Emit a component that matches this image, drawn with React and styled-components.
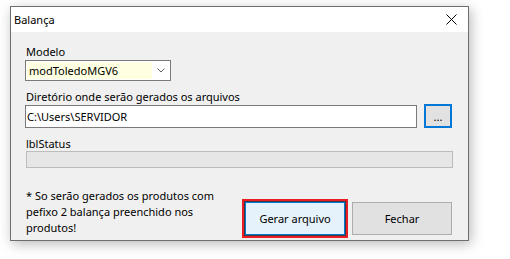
import React from "react";
import styled, { createGlobalStyle } from "styled-components";

const GlobalStyle = createGlobalStyle`
	html, body {
		margin: 0;
		padding: 0;
		background: #ffffff;
	}
	body {
		font-family: "Segoe UI", "Noto Sans", "Open Sans", sans-serif;
		font-size: 11px;
		color: #000;
	}
`;

const Desktop = styled.div`
	width: 510px;
	height: 259px;
	padding: 6px 0 0 10px;
	box-sizing: border-box;
	overflow: hidden;
`;

const Window = styled.div`
	width: 459px;
	height: 235px;
	box-sizing: border-box;
	border: 1px solid #6e6e6e;
	background: #f0f0f0;
	box-shadow: 2px 3px 12px rgba(0, 0, 0, 0.28);
	display: flex;
	flex-direction: column;
`;

const TitleBar = styled.div`
	height: 25px;
	background: #ffffff;
	display: flex;
	align-items: center;
	justify-content: space-between;
	padding-left: 3px;
	flex-shrink: 0;
`;

const Title = styled.span`
	line-height: 15px;
`;

const CloseButton = styled.div`
	width: 30px;
	height: 25px;
	display: flex;
	align-items: center;
	justify-content: center;
	margin-right: 2px;
`;

const Body = styled.div`
	flex: 1;
	padding: 12px 15px 0 14px;
	display: flex;
	flex-direction: column;
`;

const Label = styled.div`
	line-height: 15px;
	padding-left: 1px;
	margin-top: ${(p) => p.$top || 0}px;
	margin-bottom: ${(p) => p.$bottom || 0}px;
`;

const Combo = styled.div`
	width: 146px;
	height: 21px;
	box-sizing: border-box;
	border: 1px solid #7a7a7a;
	background: #ffffff;
	display: flex;
	align-items: stretch;
`;

const ComboText = styled.div`
	flex: 1;
	background: #ffffe1;
	margin: 1px 0 1px 1px;
	padding-left: 2px;
	line-height: 17px;
`;

const ComboArrow = styled.div`
	width: 18px;
	display: flex;
	align-items: center;
	justify-content: center;
`;

const PathRow = styled.div`
	display: flex;
	align-items: flex-start;
	justify-content: space-between;
	padding-right: 1px;
`;

const TextInput = styled.div`
	width: 392px;
	height: 23px;
	margin-top: 1px;
	box-sizing: border-box;
	border: 1px solid #7a7a7a;
	background: #ffffff;
	padding-left: 1px;
	line-height: 21px;
`;

const BrowseButton = styled.div`
	width: 28px;
	height: 24px;
	box-sizing: border-box;
	border: 2px solid #0078d7;
	background: #e1e1e1;
	display: flex;
	align-items: flex-end;
	justify-content: center;
	padding-bottom: 4px;
	line-height: 11px;
`;

const Progress = styled.div`
	width: 427px;
	height: 17px;
	margin-left: 1px;
	box-sizing: border-box;
	border: 1px solid #bcbcbc;
	background: #e6e6e6;
`;

const Footer = styled.div`
	display: flex;
	align-items: flex-start;
	justify-content: space-between;
	margin-top: 20px;
	padding-right: 1px;
`;

const Note = styled.div`
	line-height: 16px;
	padding-left: 1px;
`;

const Buttons = styled.div`
	display: flex;
	gap: 7px;
	margin-top: 14px;
`;

const Button = styled.div`
	width: 100px;
	height: 33px;
	box-sizing: border-box;
	display: flex;
	align-items: center;
	justify-content: center;
	border: 1px solid ${(p) => (p.$active ? "#0078d7" : "#adadad")};
	background: ${(p) => (p.$active ? "#e5f1fb" : "#e1e1e1")};
	box-shadow: ${(p) => (p.$highlight ? "0 0 0 1px #3c3c3c, 0 0 0 3px #ec1c24" : "none")};
`;

export default function App() {
	return (
		<>
			<GlobalStyle />
			<Desktop>
				<Window>
					<TitleBar>
						<Title>Balança</Title>
						<CloseButton>
							<svg width="11" height="11" viewBox="0 0 11 11">
								<path d="M0.5 0.5 L10.5 10.5 M10.5 0.5 L0.5 10.5" stroke="#000" strokeWidth="1" />
							</svg>
						</CloseButton>
					</TitleBar>
					<Body>
						<Label $bottom={1}>Modelo</Label>
						<Combo>
							<ComboText>modToledoMGV6</ComboText>
							<ComboArrow>
								<svg width="8" height="5" viewBox="0 0 8 5">
									<path d="M0.5 0.5 L4 4 L7.5 0.5" stroke="#606060" strokeWidth="1" fill="none" />
								</svg>
							</ComboArrow>
						</Combo>
						<Label $top={8}>Diretório onde serão gerados os arquivos</Label>
						<PathRow>
							<TextInput>C:\Users\SERVIDOR</TextInput>
							<BrowseButton>...</BrowseButton>
						</PathRow>
						<Label $top={8}>lblStatus</Label>
						<Progress />
						<Footer>
							<Note>
								* So serão gerados os produtos com
								<br />
								pefixo 2 balança preenchido nos
								<br />
								produtos!
							</Note>
							<Buttons>
								<Button $active $highlight>Gerar arquivo</Button>
								<Button>Fechar</Button>
							</Buttons>
						</Footer>
					</Body>
				</Window>
			</Desktop>
		</>
	);
}
